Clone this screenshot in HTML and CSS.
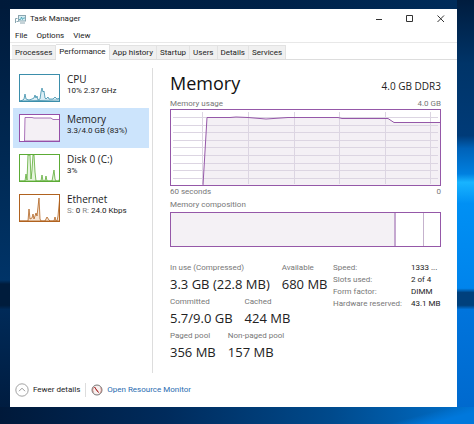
FILE: index.html
```html
<!doctype html>
<html lang="en">

<head>
    <title>Task Manager</title>
    <meta charset="UTF-8" />
    <meta name="viewport" content="width=device-width, initial-scale=1" />
    <link rel="stylesheet" href="styles.css">
</head>

<body>
    <div class="window">
        <header class="titlebar">
            <svg class="app-icon" width="11" height="9" viewBox="0 0 11 9">
                <rect x="3.5" y="0.5" width="7" height="5.5" fill="#d9edf2" stroke="#8ba6b0" />
                <path d="M4 4.500h1.500l1-2.500 1 2.500 1-1.500h1.500" fill="none" stroke="#3d9fb5" stroke-width="0.8" />
                <path d="M5 8h5M0.500 8V3.500h2M1.500 6.500h2" fill="none" stroke="#8ba6b0" />
            </svg>
            <span class="title">Task Manager</span>
            <div class="controls">
                <button aria-label="Minimize"><svg width="8" height="8" viewBox="0 0 8 8"><path d="M1 4.500h6" /></svg></button>
                <button aria-label="Maximize"><svg width="8" height="8" viewBox="0 0 8 8"><path d="M0.500 0.500h6v6h-6z" /></svg></button>
                <button aria-label="Close"><svg width="8" height="8" viewBox="0 0 8 8"><path d="M0.500 0.500l6.500 6.500M7 0.500l-6.500 6.500" /></svg></button>
            </div>
        </header>

        <nav class="menu">
            <button>File</button>
            <button>Options</button>
            <button>View</button>
        </nav>

        <div class="tabs" role="tablist">
            <button role="tab">Processes</button>
            <button role="tab" class="active" aria-selected="true">Performance</button>
            <button role="tab">App history</button>
            <button role="tab">Startup</button>
            <button role="tab">Users</button>
            <button role="tab">Details</button>
            <button role="tab">Services</button>
        </div>

        <div class="content">
            <aside class="sidebar">
                <button class="item">
                    <svg class="thumb cpu" viewBox="0 0 41 28">
                        <path d="M1 27l3-1 1-1 1-5 1 5 3 1 3-1 2-1 1-3 1 3 1-2 1 4 2-1 1-7 1-4 1 4 1-1 1 7 1 1 2-2 1 2 4 0 2-2 2 2 3-1v2z" />
                        <rect x="0.5" y="0.5" width="40" height="27" />
                    </svg>
                    <span class="info"><span class="name">CPU</span><span class="detail">10% 2.37 GHz</span></span>
                </button>
                <button class="item selected">
                    <svg class="thumb mem" viewBox="0 0 41 28">
                        <rect x="0.5" y="0.5" width="40" height="27" class="back" />
                        <path d="M5.500 27L6 3.500h7l2 .5h17l2 1.500h6.500V27z" />
                        <rect x="0.5" y="0.5" width="40" height="27" />
                    </svg>
                    <span class="info"><span class="name">Memory</span><span class="detail">3.3/4.0 GB (83%)</span></span>
                </button>
                <button class="item">
                    <svg class="thumb disk" viewBox="0 0 41 28">
                        <path d="M1 27h5l1-7 1 6 1-25h2l1 24 1-9 1-15 1 0 1 17 1 9h5l1-6 1 6 2 0 1-5 1 5h5l2-11 1 9 1 2h3l1-5v5z" />
                        <rect x="0.5" y="0.5" width="40" height="27" />
                    </svg>
                    <span class="info"><span class="name">Disk 0 (C:)</span><span class="detail">3%</span></span>
                </button>
                <button class="item">
                    <svg class="thumb net" viewBox="0 0 41 28">
                        <path d="M1 27h8l1-12 1 10 2-1 1-4 1 5 2-6 1 3 2-18 1 21 1 2h4l2-4 2 3 1 1h4l1-4 1 4h1l1-5 2-21v26z" />
                        <rect x="0.5" y="0.5" width="40" height="27" />
                    </svg>
                    <span class="info"><span class="name">Ethernet</span><span class="detail"><i>S:</i> 0 <i>R:</i> 24.0 Kbps</span></span>
                </button>
            </aside>

            <main class="main">
                <div class="heading">
                    <h1>Memory</h1>
                    <span class="total">4.0 GB DDR3</span>
                </div>
                <div class="caption"><span>Memory usage</span><span>4.0 GB</span></div>
                <svg class="chart" viewBox="0 0 271 77" preserveAspectRatio="none">
                    <path class="area" d="M33 76L37 8.500H60L66 8l12 .5 18 1.500 22-1.500h50l4 1h46l6 4h47V76z" />
                    <path class="grid" d="M3 8.500h265M3 16.500h265M3 23.500h265M3 31.500h265M3 38.500h265M3 46.500h265M3 54.500h265M3 61.500h265M3 69.500h265" />
                    <path class="grid" d="M32.500 3v72M78.500 3v72M124.500 3v72M169.500 3v72M215.500 3v72M260.500 3v72" />
                    <path class="line" d="M33 76L37 8.500H60L66 8l12 .5 18 1.500 22-1.500h50l4 1h46l6 4h47" />
                    <rect class="line" x="0.5" y="0.5" width="270" height="76" />
                </svg>
                <div class="caption"><span>60 seconds</span><span>0</span></div>
                <div class="caption comp-caption"><span>Memory composition</span></div>
                <div class="composition">
                    <div class="in-use"></div>
                    <div class="standby"></div>
                    <div class="free"></div>
                </div>

                <div class="stats">
                    <div class="counters">
                        <dl>
                            <div><dt>In use (Compressed)</dt><dd>3.3 GB (22.8 MB)</dd></div>
                            <div><dt>Available</dt><dd>680 MB</dd></div>
                        </dl>
                        <dl>
                            <div><dt>Committed</dt><dd>5.7/9.0 GB</dd></div>
                            <div><dt>Cached</dt><dd>424 MB</dd></div>
                        </dl>
                        <dl>
                            <div><dt>Paged pool</dt><dd>356 MB</dd></div>
                            <div><dt>Non-paged pool</dt><dd>157 MB</dd></div>
                        </dl>
                    </div>
                    <table class="specs">
                        <tr><th scope="row">Speed:</th><td>1333 ...</td></tr>
                        <tr><th scope="row">Slots used:</th><td>2 of 4</td></tr>
                        <tr><th scope="row">Form factor:</th><td>DIMM</td></tr>
                        <tr><th scope="row">Hardware reserved:</th><td>43.1 MB</td></tr>
                    </table>
                </div>
            </main>
        </div>

        <footer class="footer">
            <button class="fewer">
                <svg width="14" height="14" viewBox="0 0 14 14">
                    <circle cx="7" cy="7" r="6.200" fill="#fff" stroke="#8c8c8c" stroke-width="0.8" />
                    <path d="M4 8.200l3-3 3 3" fill="none" stroke="#999" />
                </svg>
                Fewer details
            </button>
            <a href="#" class="resmon">
                <svg width="12" height="12" viewBox="0 0 12 12">
                    <circle cx="6" cy="6" r="5" fill="#f7efee" stroke="#777" />
                    <path d="M2.500 8.500a4.200 4.200 0 0 1 0-5M9.500 3.500a4.200 4.200 0 0 1-1 6" fill="none" stroke="#bd7770" stroke-width="0.8" />
                    <path d="M3.500 3L7.500 8.500 5.500 6z" fill="#a52222" stroke="#a52222" stroke-width="0.8" />
                </svg>
                <span>Open Resource Monitor</span>
            </a>
        </footer>
    </div>
</body>

</html>
```
FILE: styles.css
```css
* {
    box-sizing: border-box;
}

body {
    font-family: Roboto, "Segoe UI", Tahoma, sans-serif;
    font-size: 8px;
    line-height: 12px;
    color: #222;
    margin: 0;
    padding: 9px 17px 17px 10px;
    min-height: 100vh;
    display: flex;
    background:
        linear-gradient(165deg, transparent 50%, #0078dc 75%) right bottom / 110px 17px no-repeat,
        linear-gradient(90deg, #00193a, #002b5c 35%, #004a8c 70%, #0070cc) left bottom / 100% 17px no-repeat,
        linear-gradient(#001c3e, #003468 15%, #003b78 32%, #0062b8 35%, #0080e0 41%, #18b4ff 43%, #0090f4 48%, #0084ec 68%, #00407c 69%, #00407c 72%, #0074dc 73%, #0068cc) right top / 17px 100% no-repeat,
        linear-gradient(90deg, #001a3a, #002249 60%, #002d5c) left top / 100% 9px no-repeat,
        linear-gradient(#001a3a, #002a55 40%, #003468 66%, #001c3c 67%, #001c3c 72%, #002a58 73%, #001a3c);
}

button {
    font: inherit;
    color: inherit;
    background: none;
    border: none;
    margin: 0;
    padding: 0;
}

svg {
    display: block;
    flex: none;
}

.window {
    flex: 1;
    min-width: 0;
    display: flex;
    flex-direction: column;
    background: #fff;
}

.titlebar {
    display: flex;
    align-items: center;
    gap: 4px;
    height: 20px;
    padding: 0 12px 0 5px;
}

.controls {
    display: flex;
    gap: 23px;
    margin-left: auto;
}

.controls path {
    fill: none;
    stroke: #333;
}

.menu {
    display: flex;
    gap: 9px;
    height: 14px;
    padding: 1px 5px;
    border-bottom: 1px solid #e8e8e8;
}

.tabs {
    display: flex;
    align-items: flex-end;
    height: 17px;
    padding-left: 2px;
    border-bottom: 1px solid #ddd;
}

.tabs button {
    height: 14px;
    padding: 0 3px;
    background: #f0f0f0;
    border: 1px solid #e2e2e2;
    border-width: 1px 1px 0 0;
}

.tabs .active {
    height: 16px;
    padding: 0 3px 2px;
    background: #fff;
    margin-bottom: -1px;
}

.content {
    flex: 1;
    display: flex;
    padding-top: 8px;
}

.sidebar {
    width: 143px;
    flex: none;
    padding: 0 3px;
    border-right: 1px solid #ddd;
}

.item {
    display: flex;
    width: 100%;
    height: 40px;
    padding: 6px;
    gap: 7px;
    text-align: left;
}

.selected {
    background: #cce4fc;
}

.thumb {
    width: 41px;
    height: 28px;
}

.thumb rect {
    fill: none;
    stroke: currentColor;
}

.thumb path {
    stroke: currentColor;
    stroke-width: 0.8;
}

.thumb .back {
    fill: #fff;
}

.cpu {
    color: #3b8eab;
    fill: #dceef5;
}

.mem {
    color: #9550a8;
    fill: #f4f0f5;
}

.disk {
    color: #5cab35;
    fill: #e6f4de;
}

.net {
    color: #b0621f;
    fill: #f7e6d6;
}

.info {
    display: flex;
    flex-direction: column;
    white-space: nowrap;
}

.name,
.total,
h1,
dd {
    font-family: "Open Sans", "Segoe UI", Tahoma, sans-serif;
}

.name {
    font-size: 10px;
    line-height: 11px;
}

.detail i {
    font-style: normal;
    color: #888;
}

.main {
    flex: 1;
    min-width: 0;
    padding: 3px 16px 0 17px;
}

.heading {
    display: flex;
    justify-content: space-between;
    align-items: baseline;
    line-height: 24px;
}

h1 {
    font-size: 18px;
    font-weight: 400;
    margin: 0;
    color: #111;
}

.total {
    font-size: 10px;
}

.caption {
    display: flex;
    justify-content: space-between;
    line-height: 11px;
    color: #777;
}

.chart {
    width: 100%;
    height: 77px;
}

.area {
    fill: #f4f0f5;
}

.grid {
    fill: none;
    stroke: #dcd5e2;
}

.line {
    fill: none;
    stroke: #9558a8;
}

.comp-caption {
    margin-top: 2px;
}

.composition {
    display: flex;
    height: 35px;
    margin-top: 2px;
    border: 1px solid #9558a8;
}

.in-use {
    flex: 226;
    background: #f4f1f5;
    border-right: 2px solid #c5a8d0;
}

.standby {
    flex: 27;
    border-right: 1px solid #c5b2cd;
}

.free {
    flex: 16;
}

.stats {
    display: flex;
    margin-top: 15px;
    white-space: nowrap;
}

.counters {
    width: 163px;
    flex: none;
}

dl {
    display: flex;
    gap: 12px;
    height: 34px;
    margin: 0;
}

dt {
    color: #777;
}

dd {
    margin: 0;
    font-size: 13px;
    line-height: 20px;
}

.specs {
    flex: 1;
    height: 48px;
    border-collapse: collapse;
}

.specs th,
.specs td {
    padding: 0;
    text-align: left;
    font-weight: 400;
}

.specs th {
    color: #777;
}

.specs td {
    width: 30px;
}

.footer {
    display: flex;
    align-items: center;
    height: 34px;
    padding: 0 5px;
}

.fewer,
.resmon {
    display: flex;
    align-items: center;
    gap: 4px;
}

.fewer {
    padding-right: 5px;
    border-right: 1px solid #ddd;
}

.resmon {
    padding-left: 5px;
    color: #2a6cb0;
    text-decoration: none;
}
```
